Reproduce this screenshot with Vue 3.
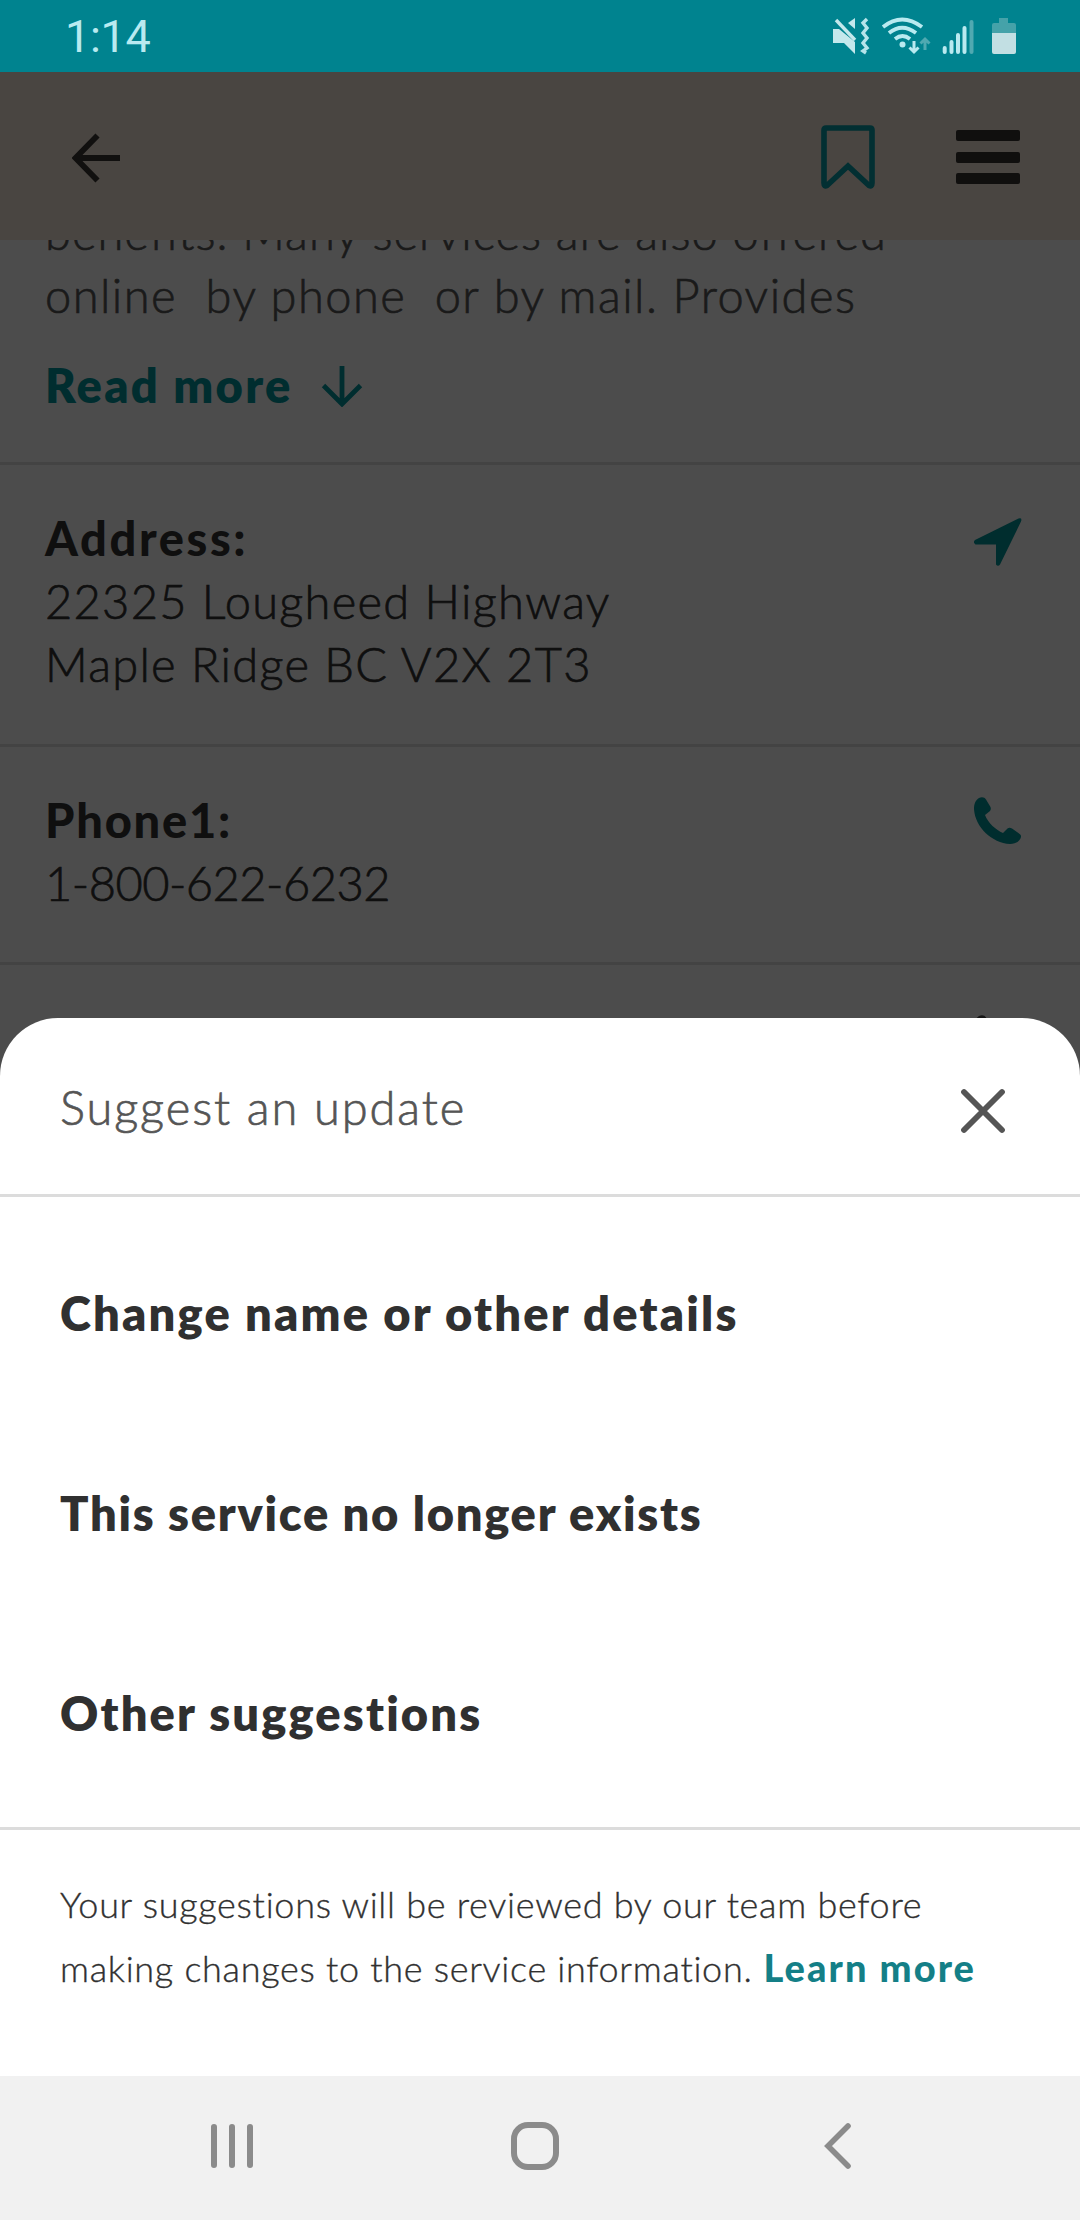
<script setup>
const options = [
  { text: 'Change name or other details', cls: 'o1' },
  { text: 'This service no longer exists', cls: 'o2' },
  { text: 'Other suggestions', cls: 'o3' },
]
const phonePath = 'M5 1 C2 3 0 6 0 12 C1 30 18 46 36 47 C42 47 46 44 47 40 C47.300 38.500 46.500 37.500 45 36.500 L38 31.500 C36 30.500 35 30.500 33.500 31.500 L29 36 C22 33 14 26 11 18 L16 14 C17 12.500 17 11.500 16.500 10 L12 2.500 C10.500 .300 8 -.500 5 1 Z'
</script>

<template>
  <div class="screen">
    <header class="status">
      <span class="time">1:14</span>
      <svg class="status-icons" width="190" height="40" viewBox="830 16 190 40">
        <g fill="#c4e8ec">
          <path d="M832 29 h6 l16 13 v12 l-11 -11 h-11 z" />
          <path d="M854 18 v11 l-7 -6 z" />
          <path d="M835 20 L854 40" stroke="#c4e8ec" stroke-width="3.400" />
        </g>
        <path d="M866 19 l-4 4 l4 5 l-4 5 l4 5 l-4 5 l4 5 l-4 3 l3 2" fill="none" stroke="#b5e4ea" stroke-width="3.400" />
        <g fill="none" stroke="#b9eaf0" stroke-width="3.800">
          <path d="M882 27 Q901 12 921 27" />
          <path d="M888 33 Q901 22.500 915 33" />
          <path d="M894 39 Q901.500 33 909 39" />
        </g>
        <circle cx="901.500" cy="44.500" r="3" fill="#b9eaf0" />
        <path d="M913 41 v11 M908.500 47.500 l4.500 4.500 l4.500 -4.500" fill="none" stroke="#b9eaf0" stroke-width="3" />
        <path d="M924 50 v-11 M919.500 43.500 l4.500 -4.500 l4.500 4.500" fill="none" stroke="#4fa9b1" stroke-width="3" />
        <g stroke="#b9eaf0" stroke-width="4" stroke-linecap="round">
          <path d="M943.700 48 v4 M950.500 42 v10 M957 35 v17 M963.500 28 v24" />
          <path d="M970.500 22 v30" stroke="#4fa9b1" />
        </g>
        <path d="M998 18 h9 v5 h6 q2 0 2 2 v8 h-24 v-8 q0 -2 2 -2 h5 z" fill="#45a2a9" />
        <path d="M991 33 h24 v19 q0 2 -2 2 h-20 q-2 0 -2 -2 z" fill="#c2dfe3" />
      </svg>
    </header>

    <div class="toolbar">
      <svg class="back" width="50" height="50" viewBox="0 0 50 50"><path d="M48 25 H4 M25.500 2.500 L3.500 25 L25.500 47.500" fill="none" stroke="#11100f" stroke-width="5.800" /></svg>
      <span class="grow"></span>
      <svg class="bookmark" width="54" height="64" viewBox="0 0 54 64"><path d="M5 3 H49 Q51 3 51 5 V58 Q51 62 48 60.500 L27 41 L6 60.500 Q3 62 3 58 V5 Q3 3 5 3 Z" fill="none" stroke="#022f32" stroke-width="5.600" /></svg>
      <div class="menu"><i></i><i></i><i></i></div>
    </div>

    <main class="details">
      <section class="row about">
        <div class="line d1">benefits. Many services are also offered</div>
        <div class="line d2">online&nbsp; by phone&nbsp; or by mail. Provides</div>
        <div class="line more"><span>Read more</span>
          <svg width="42" height="42" viewBox="0 0 42 42"><path d="M21 1 V38 M2.500 20.500 L21 39 L39.500 20.500" fill="none" stroke="#002d2f" stroke-width="4.800" /></svg>
        </div>
      </section>
      <section class="row address">
        <div class="line label a1">Address:</div>
        <div class="line a2">22325 Lougheed Highway</div>
        <div class="line a3">Maple Ridge BC V2X 2T3</div>
        <svg class="glyph" width="48" height="48" viewBox="0 0 48 48"><path d="M44.500 .500 Q48.500 -.500 47 3.500 L26 46.500 Q24 49 22 46.500 V26.500 H1.500 Q-1.500 24.500 1 22 Z" fill="#002d2e" /></svg>
      </section>
      <section class="row phone">
        <div class="line label p1">Phone1:</div>
        <div class="line p2">1-800-622-6232</div>
        <svg class="glyph" width="48" height="48" viewBox="0 0 48 48"><path :d="phonePath" fill="#002d2e" /></svg>
      </section>
      <section class="row last">
        <svg class="glyph" width="48" height="48" viewBox="0 0 48 48"><path :d="phonePath" fill="#151515" /></svg>
      </section>
    </main>

    <div class="sheet">
      <div class="sheet-head">
        <span class="title">Suggest an update</span>
        <svg class="close" width="46" height="46" viewBox="0 0 46 46"><path d="M4 4 L42 42 M42 4 L4 42" stroke="#555" stroke-width="5.800" stroke-linecap="round" /></svg>
      </div>
      <div class="options">
        <div v-for="o in options" :key="o.cls" class="option" :class="o.cls">{{ o.text }}</div>
      </div>
      <div class="note">
        <div class="n1">Your suggestions will be reviewed by our team before</div>
        <div class="n2">making changes to the service information.<b>Learn more</b></div>
      </div>
    </div>

    <nav class="nav">
      <svg width="46" height="48" viewBox="0 0 46 48"><path d="M5 5 V43 M23 5 V43 M41 5 V43" stroke="#8b8b8b" stroke-width="6" stroke-linecap="round" /></svg>
      <svg class="home" width="48" height="48" viewBox="0 0 48 48"><rect x="3" y="3" width="42" height="42" rx="14" fill="none" stroke="#8b8b8b" stroke-width="6" /></svg>
      <svg width="28" height="46" viewBox="0 0 28 46"><path d="M25 3 L5 23 L25 43" fill="none" stroke="#8b8b8b" stroke-width="5.600" stroke-linecap="round" /></svg>
    </nav>
  </div>
</template>

<style>
body { margin: 0; }
</style>

<style scoped>
.screen { width: 1080px; height: 2220px; display: flex; flex-direction: column; overflow: hidden; background: #4c4c4c; font-family: Lato, "Open Sans", sans-serif; }
.status { flex: none; height: 72px; box-sizing: border-box; padding: 0 59px 0 65px; display: flex; justify-content: space-between; align-items: flex-start; background: #00838f; }
.time { font: 400 45px/74px Roboto, sans-serif; letter-spacing: -.3px; color: #b9eaf0; }
.status-icons { margin-top: 16px; }
.toolbar { flex: none; height: 168px; box-sizing: border-box; padding: 2px 60px 0 72px; display: flex; align-items: center; background: #494541; }
.back { margin-top: 2px; }
.grow { flex: 1; }
.bookmark { margin-right: 81px; }
.menu { width: 64px; height: 54px; display: flex; flex-direction: column; justify-content: space-between; }
.menu i { height: 11px; border-radius: 2px; background: #100f0e; }
.details { flex: none; height: 778px; overflow: hidden; }
.row { position: relative; box-sizing: border-box; padding: 42px 45px 0; border-bottom: 3px solid #434343; font-size: 47px; font-weight: 300; color: #0f0f0f; }
.line { flex: none; height: 63px; line-height: 63px; white-space: nowrap; -webkit-text-stroke: .7px currentColor; }
.about { height: 225px; display: flex; flex-direction: column; padding-top: 0; color: #1a1a1a; }
.d1 { margin-top: -39px; letter-spacing: 1.03px; }
.d2 { letter-spacing: 1.47px; }
.more { display: flex; align-items: center; gap: 28px; margin-top: 27px; font-weight: 800; color: #002d2f; letter-spacing: 2.3px; -webkit-text-stroke: 0; }
.more svg { margin-top: 0; }
.address { height: 282px; }
.phone { height: 218px; }
.last { height: 200px; }
.label { font-weight: 900; -webkit-text-stroke: 0; }
.a1 { letter-spacing: 2.6px; }
.a2 { letter-spacing: 1.3px; }
.a3 { letter-spacing: 1.3px; }
.p1 { letter-spacing: 1.8px; }
.p2 { letter-spacing: -.5px; }
.glyph { position: absolute; right: 58px; top: 50px; }
.address .glyph { top: 53px; }
.sheet { flex: none; height: 1058px; border-radius: 58px 58px 0 0; background: #fff; color: #303030; }
.sheet-head { height: 179px; box-sizing: border-box; border-bottom: 3px solid #dcdcdc; padding: 0 74px 0 60px; display: flex; align-items: center; justify-content: space-between; }
.title { padding-top: 2px; font-size: 47px; font-weight: 300; color: #555; letter-spacing: 1.93px; -webkit-text-stroke: .7px currentColor; }
.close { margin-top: 9px; }
.options { padding: 16px 60px 14px; border-bottom: 3px solid #dcdcdc; }
.option { height: 200px; line-height: 200px; font-size: 47px; font-weight: 800; white-space: nowrap; }
.o1 { letter-spacing: 2.2px; }
.o2 { letter-spacing: 1.73px; }
.o3 { letter-spacing: 2.15px; }
.note { padding: 43px 60px 0; font-size: 36px; font-weight: 300; line-height: 63px; white-space: nowrap; -webkit-text-stroke: .35px currentColor; }
.n1 { letter-spacing: .71px; }
.n2 { height: 63px; letter-spacing: .7px; }
.n2 b { margin-left: 11px; font-size: 38px; font-weight: 900; letter-spacing: 2.05px; color: #147f87; -webkit-text-stroke: 0; }
.nav { flex: none; height: 144px; box-sizing: border-box; padding: 0 229px 4px 209px; display: flex; align-items: center; justify-content: space-between; background: #f1f1f1; }
.home { position: relative; left: -4px; }
</style>
